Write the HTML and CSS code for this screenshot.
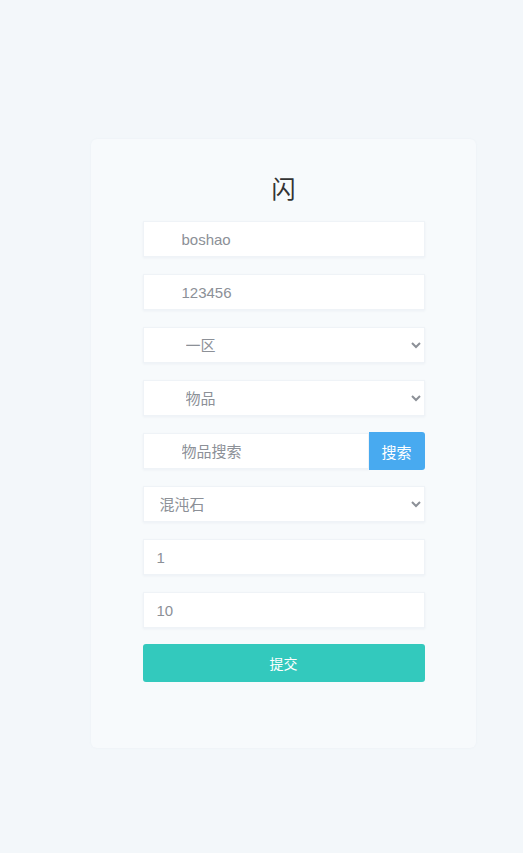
FILE: index.html
```html
<!DOCTYPE html>
<html lang="zh">
<head>
<meta charset="utf-8">
<title>闪</title>
<link rel="stylesheet" href="styles.css">
</head>
<body>
<div class="page">
  <form class="card">
    <h1 class="title">闪</h1>
    <input class="field pad-wide" type="text" value="boshao">
    <input class="field pad-wide" type="text" value="123456">
    <select class="field select pad-wide">
      <option>一区</option>
    </select>
    <select class="field select pad-wide">
      <option>物品</option>
    </select>
    <div class="search-row">
      <input class="field search-input pad-wide" type="text" placeholder="物品搜索">
      <button class="search-btn" type="button">搜索</button>
    </div>
    <select class="field select pad-narrow">
      <option>混沌石</option>
    </select>
    <input class="field pad-num" type="text" value="1">
    <input class="field pad-num" type="text" value="10">
    <button class="submit" type="button">提交</button>
  </form>
</div>
</body>
</html>
```
FILE: styles.css
```css
html, body {
  margin: 0;
  padding: 0;
  background: #f3f7fa;
  font-family: "Liberation Sans", "Noto Sans CJK SC", sans-serif;
}
.page {
  padding-top: 139px;
  padding-left: 91px;
  height: 853px;
  box-sizing: border-box;
}
.card {
  width: 385px;
  height: 609px;
  box-sizing: border-box;
  background: #f7fafc;
  border-radius: 6px;
  box-shadow: 0 0 2px rgba(215, 222, 232, 0.25);
  padding: 32px 0 0;
  display: flex;
  flex-direction: column;
  align-items: center;
  gap: 17px;
}
.title {
  margin: 0 0 -1px;
  font-size: 24px;
  line-height: 34px;
  font-weight: normal;
  color: #333;
  font-family: "Noto Sans CJK SC", sans-serif;
}
.field {
  width: 282px;
  height: 36px;
  box-sizing: border-box;
  margin: 0;
  border: 1px solid #eff3f7;
  background: #fff;
  color: #8c9097;
  font-size: 15px;
  font-family: "Liberation Sans", "Noto Sans CJK SC", sans-serif;
  outline: none;
  border-radius: 0;
  box-shadow: 0 1px 2px rgba(220, 228, 236, 0.4);
}
.field::placeholder {
  color: #8c9097;
}
.pad-wide {
  padding-left: 38px;
}
.pad-narrow {
  padding-left: 12px;
}
.pad-num {
  padding-left: 13px;
}
.select {
  padding-right: 4px;
}
.search-row {
  width: 282px;
  height: 36px;
  display: flex;
  align-items: center;
}
.search-input {
  width: 226px;
  flex: none;
}
.search-btn {
  flex: none;
  width: 56px;
  height: 38px;
  margin: -1px 0;
  border: none;
  border-radius: 0 3px 3px 0;
  background: #48aaf0;
  color: #fff;
  font-size: 15px;
  font-family: "Noto Sans CJK SC", sans-serif;
  padding: 0;
}
.submit {
  width: 282px;
  height: 38px;
  margin-top: -1px;
  border: none;
  border-radius: 3px;
  background: #33c9bd;
  color: #fff;
  font-size: 14px;
  font-family: "Noto Sans CJK SC", sans-serif;
  padding: 0;
}
```
